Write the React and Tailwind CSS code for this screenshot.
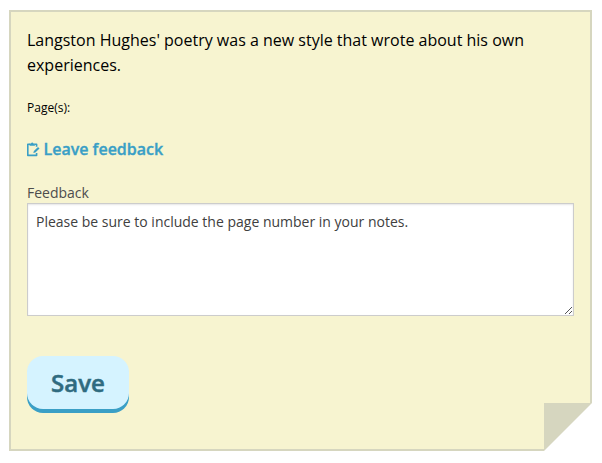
function ClipboardEditIcon() {
  return (
    <svg width="13" height="15" viewBox="0 0 13 15" fill="none" className="shrink-0">
      <path d="M3 2.2H0.8V13.4H9.6V11M9.6 4.8V2.2H7.8" stroke="#3a9fc6" strokeWidth="1.6" strokeLinejoin="round" />
      <path d="M2.6 1.4H3.9Q5.2 -0.6 6.5 1.4H7.9V3.7H2.6Z" fill="#3a9fc6" />
      <path d="M11 5L12.5 6.4L8.4 10.4L6.3 11L6.9 8.9Z" fill="#3a9fc6" />
    </svg>
  );
}

function FeedbackField() {
  return (
    <div className="mt-[22px]">
      <label htmlFor="feedback" className="block h-[20px] text-[14px] leading-[20px] text-[#4d4d4d]">
        Feedback
      </label>
      <div className="relative h-[113px]">
        <textarea
          id="feedback"
          className="block h-[113px] w-full resize-none border border-[#cccccc] bg-white px-2 py-[8px] text-[14px] leading-[20px] text-[#404040] shadow-[inset_0_1px_2px_rgba(0,0,0,0.1)] outline-none"
          defaultValue="Please be sure to include the page number in your notes."
        />
        <svg width="9" height="9" viewBox="0 0 9 9" className="absolute right-[1px] bottom-[1px]" shapeRendering="crispEdges">
          <path d="M0.5 8.5L7.5 1.5M4.5 8.5L7.5 5.5" stroke="#555555" strokeWidth="1" />
        </svg>
      </div>
    </div>
  );
}

export default function App() {
  return (
    <div className="h-[463px] w-[602px] bg-white pt-[10px] pl-[9px] font-['Open_Sans',sans-serif]">
      <div className="relative h-[441px] w-[583px] border-2 border-[#d6d6bf] bg-[#f7f4d0] px-4 pt-[16px]">
        <p className="text-[16px] leading-[25px] text-black">
          Langston Hughes' poetry was a new style that wrote about his own experiences.
        </p>
        <p className="mt-[20px] text-[12px] leading-[20px] text-black">Page(s):</p>
        <a className="mt-[19px] flex h-[24px] items-center gap-[3.5px] text-[16px] leading-[24px] font-semibold text-[#3a9fc6] [-webkit-text-stroke:0.35px_#3a9fc6]">
          <ClipboardEditIcon />
          Leave feedback
        </a>
        <FeedbackField />
        <button className="mt-[40px] block h-[53px] w-[102px] rounded-[16px] bg-[#d5f3ff] text-[24px] leading-[53px] font-semibold text-[#2f6b80] shadow-[0_4px_0_#3a9fc6] [-webkit-text-stroke:0.5px_#2f6b80]">
          Save
        </button>
        <svg width="48" height="48" viewBox="0 0 48 48" className="absolute -right-[2px] -bottom-[2px]">
          <path d="M0 0H48V48H0Z" fill="#ffffff" />
          <path d="M0 0H48L0 48Z" fill="#d6d6bf" />
        </svg>
      </div>
    </div>
  );
}
